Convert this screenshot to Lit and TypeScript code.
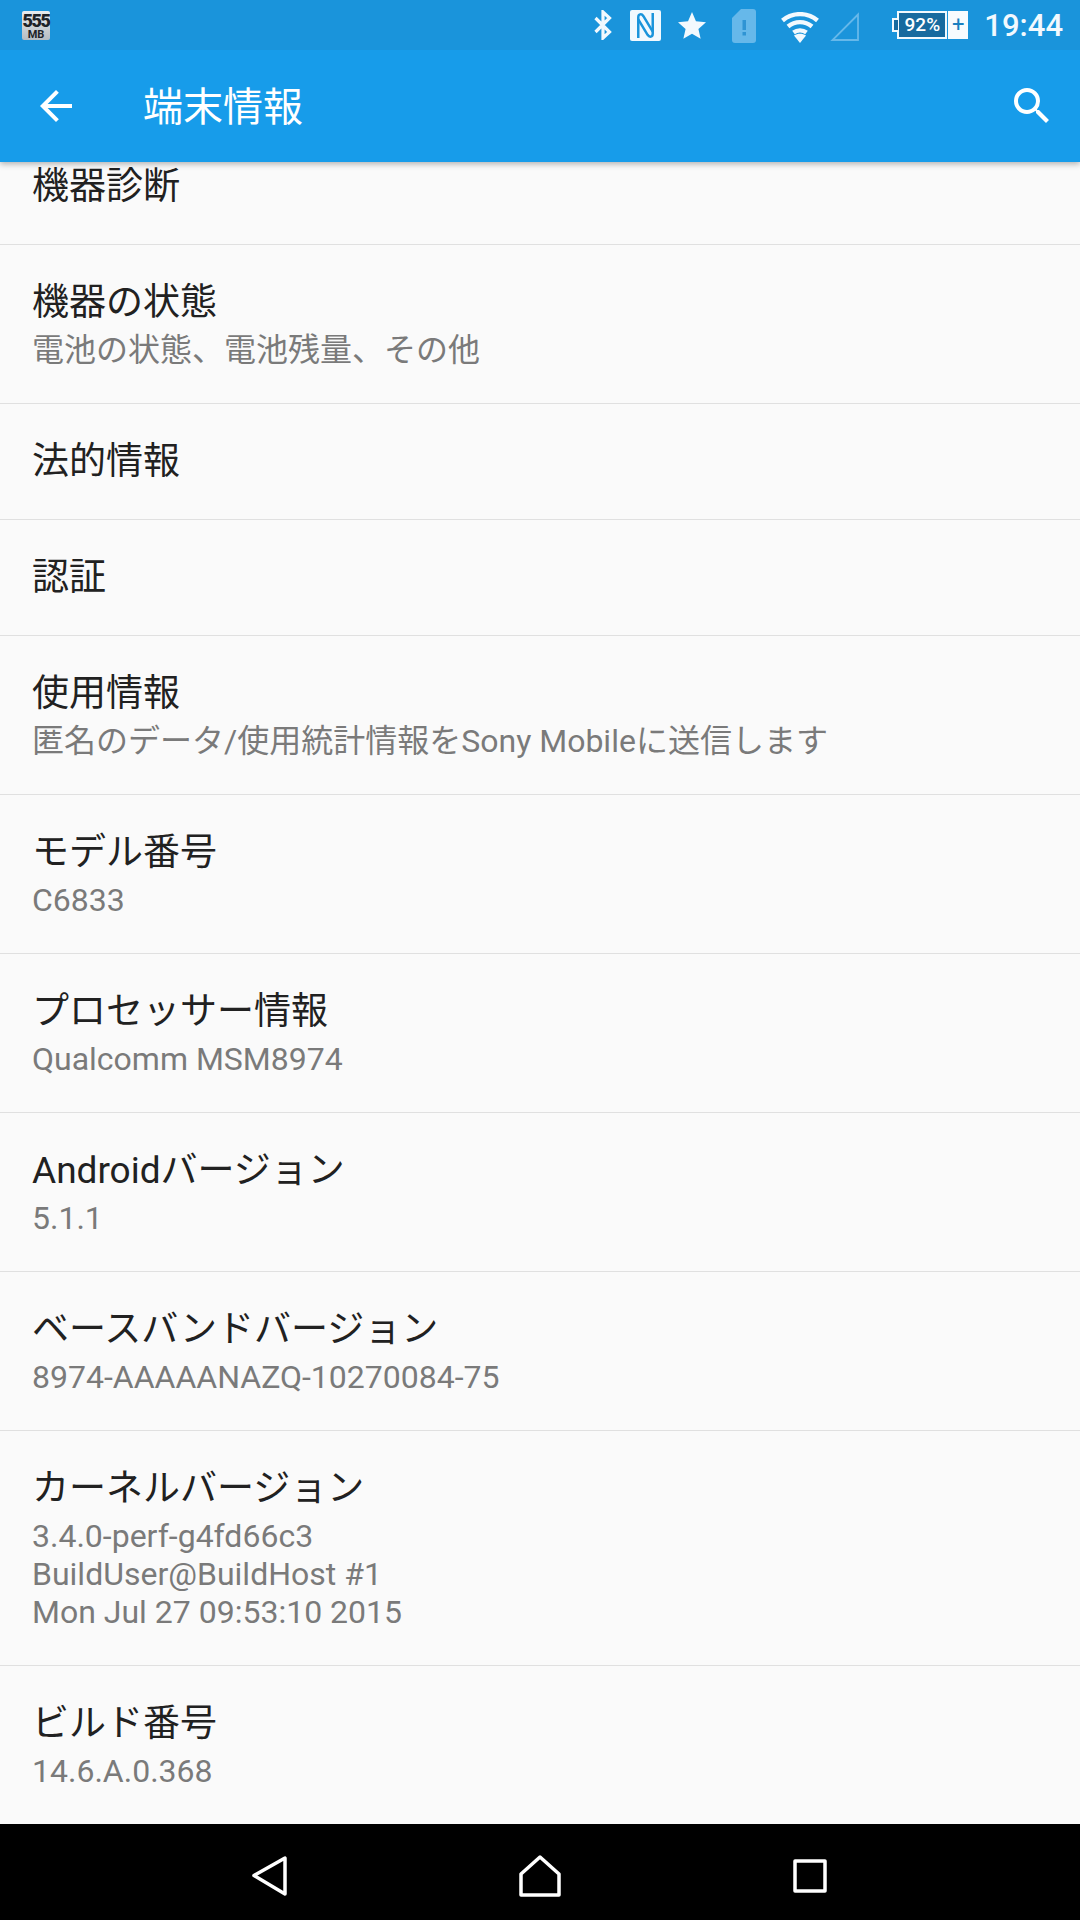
import { LitElement, html, css, svg } from 'lit';
import { customElement } from 'lit/decorators.js';

interface Row {
  title: string;
  lines?: string[];
}

const ROWS: Row[] = [
  { title: '機器診断' },
  { title: '機器の状態', lines: ['電池の状態、電池残量、その他'] },
  { title: '法的情報' },
  { title: '認証' },
  { title: '使用情報', lines: ['匿名のデータ/使用統計情報をSony Mobileに送信します'] },
  { title: 'モデル番号', lines: ['C6833'] },
  { title: 'プロセッサー情報', lines: ['Qualcomm MSM8974'] },
  { title: 'Androidバージョン', lines: ['5.1.1'] },
  { title: 'ベースバンドバージョン', lines: ['8974-AAAAANAZQ-10270084-75'] },
  {
    title: 'カーネルバージョン',
    lines: ['3.4.0-perf-g4fd66c3', 'BuildUser@BuildHost #1', 'Mon Jul 27 09:53:10 2015'],
  },
  { title: 'ビルド番号', lines: ['14.6.A.0.368'] },
];

const bluetooth = svg`<svg width="18" height="30" viewBox="0 0 18 30" fill="none" stroke="#f2f9fe" stroke-width="3.2">
  <path d="M1.500 8l14 14-6.500 6V2l6.500 6-14 14" /></svg>`;

const nfc = svg`<svg width="31" height="31" viewBox="0 0 30 30" fill="none">
  <rect width="30" height="30" rx="2" fill="#f2f9fe" />
  <path d="M8 27V7c0-3 3-4 5-1l9 15" stroke="#1a94db" stroke-width="2.400" />
  <path d="M22 3v20c0 3-3 4-5 1L8 9" stroke="#1a94db" stroke-width="2.400" />
</svg>`;

const star = svg`<svg width="28" height="27" viewBox="0 0 24 23" fill="#f2f9fe">
  <path d="M12 0l3.400 7.900 8.600.8-6.500 5.700 1.900 8.500L12 18.500l-7.400 4.400 1.900-8.500L0 8.700l8.600-.8z" /></svg>`;

const sim = svg`<svg width="24" height="34" viewBox="0 0 24 34">
  <path d="M9 0h12a3 3 0 0 1 3 3v28a3 3 0 0 1-3 3H3a3 3 0 0 1-3-3V9z" fill="#66b8ea" />
  <rect x="10.500" y="11" width="3.500" height="10" fill="#2f94d4" />
  <rect x="10.500" y="23" width="3.500" height="3.500" fill="#2f94d4" />
</svg>`;

const wifi = svg`<svg width="38" height="31" viewBox="0 0 38 31" fill="none" stroke="#f2f9fe" stroke-width="4.400">
  <path d="M1.500 8.500c10-8.500 25-8.500 35 0" />
  <path d="M7 14.500c7-5.800 17-5.800 24 0" />
  <path d="M12.500 20.500c3.700-2.800 9.300-2.800 13 0" />
  <path d="M19 31l-6-7.500c3.500-2.400 8.500-2.400 12 0z" fill="#f2f9fe" stroke="none" />
</svg>`;

const signal = svg`<svg width="29" height="29" viewBox="0 0 29 29" fill="none" stroke="#66b8ea" stroke-width="1.800">
  <path d="M28 2.500V28H2.500z" /></svg>`;

const back = svg`<svg width="48" height="48" viewBox="0 0 24 24" fill="#fff">
  <path d="M20 11H7.830l5.590-5.590L12 4l-8 8 8 8 1.410-1.410L7.830 13H20v-2z" /></svg>`;

const search = svg`<svg width="48" height="48" viewBox="0 0 24 24" fill="#fff">
  <path d="M15.500 14h-.79l-.28-.27A6.470 6.470 0 0 0 16 9.500 6.500 6.500 0 1 0 9.500 16c1.610 0 3.090-.59 4.230-1.570l.27.28v.79l5 4.990L20.490 19l-4.990-5zm-6 0C7.010 14 5 11.990 5 9.500S7.010 5 9.500 5 14 7.010 14 9.500 11.990 14 9.500 14z" /></svg>`;

const navBack = svg`<svg width="36" height="40" viewBox="0 0 36 40" fill="none" stroke="#fff" stroke-width="3.500" stroke-linejoin="round">
  <path d="M2 19.500L33 2v36z" /></svg>`;

const navHome = svg`<svg width="42" height="42" viewBox="0 0 42 42" fill="none" stroke="#fff" stroke-width="3.500" stroke-linejoin="round">
  <path d="M21 2l19 17v21H2V19z" /></svg>`;

const navRecent = svg`<svg width="34" height="34" viewBox="0 0 34 34" fill="none" stroke="#fff" stroke-width="3.500" stroke-linejoin="round">
  <rect x="2" y="2" width="30" height="30" /></svg>`;

@customElement('app-root')
export class AppRoot extends LitElement {
  static styles = css`
    :host {
      display: block;
      font-family: Roboto, 'Noto Sans CJK JP', sans-serif;
    }
    .page {
      width: 1080px;
      height: 1920px;
      display: flex;
      flex-direction: column;
      background: #fafafa;
      overflow: hidden;
    }
    .status {
      height: 50px;
      flex: none;
      display: flex;
      align-items: center;
      background: #1a94db;
      padding: 0 17px 0 22px;
      position: relative;
      z-index: 2;
    }
    .mem {
      width: 28px;
      height: 29px;
      border-radius: 2px;
      background: linear-gradient(#e8ecef, #b5bcc2);
      color: #1d2328;
      display: flex;
      flex-direction: column;
      align-items: center;
      font-weight: 700;
      line-height: 1;
    }
    .mem b { font-size: 18px; margin-top: 1px; letter-spacing: -1.500px; }
    .mem i { font-size: 11px; font-style: normal; margin-top: -1px; }
    .icons {
      margin-left: auto;
      display: flex;
      align-items: center;
    }
    .icons svg { display: block; }
    .bt { margin-right: 18px; }
    .nfc { margin-right: 17px; }
    .star { margin-right: 26px; }
    .sim { margin: 2px 25px 0 0; }
    .wifi { margin: 5px 11px 0 0; }
    .sig { margin: 3px 33px 0 0; }
    .battery {
      display: flex;
      align-items: stretch;
      height: 28px;
      margin-right: 16px;
    }
    .cell {
      width: 50px;
      box-sizing: border-box;
      border: 2px solid #f2f9fe;
      background: #176a9f;
      color: #fff;
      font-size: 19px;
      font-weight: 500;
      line-height: 24px;
      text-align: center;
      margin-left: 5px;
      position: relative;
    }
    .cell::before {
      content: '';
      position: absolute;
      left: -7px;
      top: 5px;
      width: 6px;
      height: 14px;
      border: 2px solid #f2f9fe;
      border-right: none;
      box-sizing: border-box;
      background: #176a9f;
    }
    .plus {
      width: 20px;
      margin-left: 1px;
      background: #f7fbfe;
      color: #1a7fc0;
      font-size: 22px;
      font-weight: 400;
      line-height: 27px;
      text-align: center;
    }
    .time {
      color: #f2f9fe;
      font-size: 31px;
      font-weight: 500;
      line-height: 1;
    }
    .bar {
      height: 112px;
      flex: none;
      display: flex;
      align-items: center;
      background: #179cea;
      box-shadow: 0 2px 6px rgba(0, 0, 0, 0.3);
      padding: 0 24px 0 32px;
      position: relative;
      z-index: 1;
    }
    .bar svg { display: block; }
    .bar h1 {
      margin: 3px 0 0 63px;
      flex: 1;
      color: #fff;
      font-size: 40px;
      font-weight: 400;
      line-height: 1;
    }
    .list {
      flex: 1;
      min-height: 0;
      overflow: hidden;
    }
    .rows { margin-top: -33px; }
    .row {
      min-height: 115px;
      padding: 0 32px;
      display: flex;
      flex-direction: column;
      justify-content: center;
      border-bottom: 1px solid #e0e0e0;
    }
    .row.sub {
      padding-top: 34px;
      padding-bottom: 34px;
      min-height: 0;
    }
    .title {
      color: #212121;
      font-size: 37px;
      line-height: 48px;
    }
    .lines {
      margin-top: 4px;
      color: #7a7a7a;
      font-size: 32px;
      line-height: 38px;
    }
    .nav {
      height: 96px;
      flex: none;
      box-sizing: border-box;
      padding: 7px 135px 0;
      background: #000;
      display: grid;
      grid-template-columns: repeat(3, 270px);
      align-items: center;
      justify-items: center;
    }
    .nav svg { display: block; }
  `;

  private _renderRow(row: Row) {
    if (!row.lines) {
      return html`<div class="row"><div class="title">${row.title}</div></div>`;
    }
    return html`<div class="row sub">
      <div class="title">${row.title}</div>
      <div class="lines">${row.lines.map((l) => html`<div>${l}</div>`)}</div>
    </div>`;
  }

  render() {
    return html`
      <div class="page">
        <div class="status">
          <div class="mem"><b>555</b><i>MB</i></div>
          <div class="icons">
            <span class="bt">${bluetooth}</span>
            <span class="nfc">${nfc}</span>
            <span class="star">${star}</span>
            <span class="sim">${sim}</span>
            <span class="wifi">${wifi}</span>
            <span class="sig">${signal}</span>
            <div class="battery">
              <div class="cell">92%</div>
              <div class="plus">+</div>
            </div>
            <div class="time">19:44</div>
          </div>
        </div>
        <div class="bar">
          ${back}
          <h1>端末情報</h1>
          ${search}
        </div>
        <div class="list">
          <div class="rows">${ROWS.map((r) => this._renderRow(r))}</div>
        </div>
        <div class="nav">${navBack}${navHome}${navRecent}</div>
      </div>
    `;
  }
}
